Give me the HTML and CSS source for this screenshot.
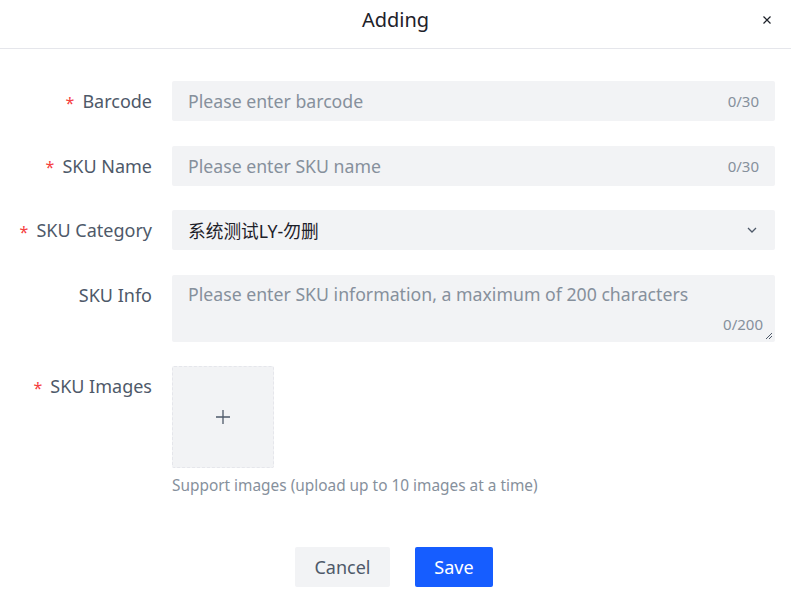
FILE: index.html
```html
<!DOCTYPE html>
<html>
<head>
<meta charset="utf-8">
<link rel="stylesheet" href="styles.css">
</head>
<body>
<div class="modal">
  <div class="header">
    <div class="title">Adding</div>
    <div class="close">
      <svg width="12" height="12" viewBox="0 0 12 12"><path d="M2.5 2.5L9.5 9.5M9.5 2.5L2.5 9.5" stroke="#1d2129" stroke-width="1.2" fill="none"/></svg>
    </div>
  </div>
  <div class="body">
    <div class="row">
      <div class="label"><span class="star">*</span>Barcode</div>
      <div class="control">
        <div class="input"><span class="ph">Please enter barcode</span><span class="count">0/30</span></div>
      </div>
    </div>
    <div class="row">
      <div class="label"><span class="star">*</span>SKU Name</div>
      <div class="control">
        <div class="input"><span class="ph">Please enter SKU name</span><span class="count">0/30</span></div>
      </div>
    </div>
    <div class="row">
      <div class="label"><span class="star">*</span>SKU Category</div>
      <div class="control">
        <div class="input"><span class="val">系统测试LY-勿删</span>
          <svg class="chev" width="12" height="12" viewBox="0 0 12 12"><path d="M2 4L6 8L10 4" stroke="#4e5969" stroke-width="1.3" fill="none"/></svg>
        </div>
      </div>
    </div>
    <div class="row">
      <div class="label">SKU Info</div>
      <div class="control">
        <div class="textarea">
          <span class="ph">Please enter SKU information, a maximum of 200 characters</span>
          <span class="count ta-count">0/200</span>
          <svg class="resize" width="8" height="8" viewBox="0 0 8 8"><path d="M7 1L1 7M7 4L4 7" stroke="#4e5969" stroke-width="1" fill="none"/></svg>
        </div>
      </div>
    </div>
    <div class="row">
      <div class="label"><span class="star">*</span>SKU Images</div>
      <div class="control">
        <div class="upload">
          <svg width="14" height="14" viewBox="0 0 14 14"><path d="M7 0V14M0 7H14" stroke="#4e5969" stroke-width="1.3" fill="none"/></svg>
        </div>
        <div class="help">Support images (upload up to 10 images at a time)</div>
      </div>
    </div>
  </div>
  <div class="footer">
    <button class="btn cancel">Cancel</button>
    <button class="btn save">Save</button>
  </div>
</div>
</body>
</html>
```
FILE: styles.css
```css
* { box-sizing: border-box; }
html, body { margin: 0; padding: 0; background: #fff; }
body {
  font-family: "Noto Sans", "Noto Sans CJK SC", sans-serif;
  color: #1d2129;
  width: 791px;
  height: 609px;
  overflow: hidden;
}
.modal { display: flex; flex-direction: column; }
.header {
  height: 49px;
  border-bottom: 1px solid #e5e6eb;
  display: flex;
  align-items: center;
  justify-content: center;
  position: relative;
}
.title { font-size: 20px; color: #1d2129; margin-top: -10px; }
.close { position: absolute; right: 18px; top: 14px; width: 12px; height: 12px; display: flex; }
.body {
  padding: 32px 16px 0 16px;
  display: flex;
  flex-direction: column;
  gap: 24.5px;
}
.row { display: flex; align-items: flex-start; }
.label {
  width: 136px;
  height: 40px;
  margin-right: 20px;
  display: flex;
  align-items: center;
  justify-content: flex-end;
  font-size: 18px;
  color: #4e5969;
  white-space: nowrap;
}
.star { color: #f53f3f; margin-right: 8px; font-size: 16px; padding-top: 3px; }
.control { flex: 1; }
.input {
  height: 40px;
  background: #f2f3f5;
  border-radius: 2px;
  display: flex;
  align-items: center;
  padding: 0 16px;
  font-size: 17.7px;
}
.ph { color: #86909c; flex: 1; }
.val { color: #1d2129; flex: 1; }
.count { color: #86909c; font-size: 15px; }
.chev { margin-right: 1px; }
.textarea {
  height: 67px;
  background: #f2f3f5;
  border-radius: 2px;
  padding: 6px 16px;
  font-size: 17.7px;
  position: relative;
}
.textarea .ph { display: block; line-height: 27px; }
.ta-count { position: absolute; right: 12px; bottom: 8px; }
.resize { position: absolute; right: 2px; bottom: 2px; }
.upload {
  width: 102px;
  height: 102px;
  background: #f2f3f5;
  border: 1px dashed #e5e6eb;
  border-radius: 2px;
  display: flex;
  align-items: center;
  justify-content: center;
}
.help { margin-top: 7px; font-size: 15.4px; color: #86909c; line-height: 22px; }
.footer {
  display: flex;
  justify-content: center;
  gap: 25px;
  padding-top: 50px;
  padding-right: 3px;
}
.btn {
  height: 40px;
  border: none;
  border-radius: 2px;
  font-family: "Noto Sans", sans-serif;
  font-size: 18px;
  padding: 0;
}
.cancel { background: #f2f3f5; color: #4e5969; width: 95px; }
.save { background: #165dff; color: #fff; width: 78px; }
```
